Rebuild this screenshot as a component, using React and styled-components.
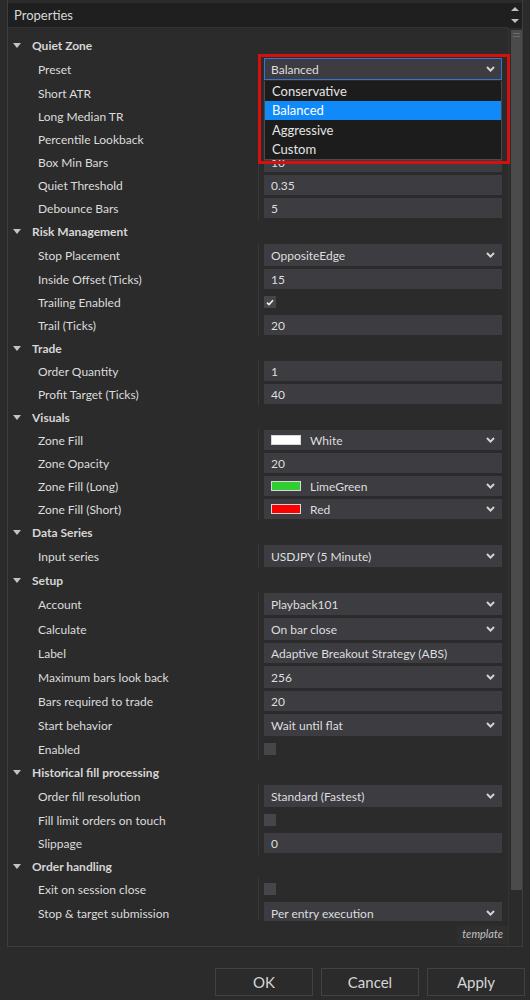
import React from "react";
import styled, { createGlobalStyle } from "styled-components";

const GlobalStyle = createGlobalStyle`
  html, body {
    margin: 0;
    padding: 0;
    background: #2b2b2b;
  }
  body {
    font-family: "Segoe UI", Lato, "Noto Sans", sans-serif;
    color: #dedede;
  }
`;

// values under the open Preset list are not visible, so they stay empty
const sections = [
  {
    title: "Quiet Zone",
    rows: [
      { label: "Preset", type: "open", value: "Balanced" },
      { label: "Short ATR", type: "text", value: "" },
      { label: "Long Median TR", type: "text", value: "" },
      { label: "Percentile Lookback", type: "text", value: "" },
      { label: "Box Min Bars", type: "text", value: "10" },
      { label: "Quiet Threshold", type: "text", value: "0.35" },
      { label: "Debounce Bars", type: "text", value: "5" },
    ],
  },
  {
    title: "Risk Management",
    rows: [
      { label: "Stop Placement", type: "enum", value: "OppositeEdge" },
      { label: "Inside Offset (Ticks)", type: "text", value: "15" },
      { label: "Trailing Enabled", type: "check", checked: true },
      { label: "Trail (Ticks)", type: "text", value: "20" },
    ],
  },
  {
    title: "Trade",
    rows: [
      { label: "Order Quantity", type: "text", value: "1" },
      { label: "Profit Target (Ticks)", type: "text", value: "40" },
    ],
  },
  {
    title: "Visuals",
    rows: [
      { label: "Zone Fill", type: "color", value: "White", swatch: "#ffffff" },
      { label: "Zone Opacity", type: "text", value: "20" },
      { label: "Zone Fill (Long)", type: "color", value: "LimeGreen", swatch: "#32cd32" },
      { label: "Zone Fill (Short)", type: "color", value: "Red", swatch: "#ff0000" },
    ],
  },
  {
    title: "Data Series",
    rows: [{ label: "Input series", type: "enum", value: "USDJPY (5 Minute)" }],
  },
  {
    title: "Setup",
    rows: [
      { label: "Account", type: "enum", value: "Playback101" },
      { label: "Calculate", type: "enum", value: "On bar close" },
      { label: "Label", type: "text", value: "Adaptive Breakout Strategy (ABS)" },
      { label: "Maximum bars look back", type: "enum", value: "256" },
      { label: "Bars required to trade", type: "text", value: "20" },
      { label: "Start behavior", type: "enum", value: "Wait until flat" },
      { label: "Enabled", type: "check", checked: false },
    ],
  },
  {
    title: "Historical fill processing",
    rows: [
      { label: "Order fill resolution", type: "enum", value: "Standard (Fastest)" },
      { label: "Fill limit orders on touch", type: "check", checked: false },
      { label: "Slippage", type: "text", value: "0" },
    ],
  },
  {
    title: "Order handling",
    rows: [
      { label: "Exit on session close", type: "check", checked: false },
      { label: "Stop & target submission", type: "enum", value: "Per entry execution" },
    ],
  },
];

const presetOptions = ["Conservative", "Balanced", "Aggressive", "Custom"];

const Chevron = () => (
  <ChevronIcon width="9" height="6" viewBox="0 0 9 6">
    <polyline points="1,1 4.5,4.6 8,1" fill="none" stroke="#d4d4d4" strokeWidth="2" />
  </ChevronIcon>
);

const CheckMark = () => (
  <svg width="8" height="7" viewBox="0 0 8 7">
    <polyline points="1,3.6 3,5.5 7,1.2" fill="none" stroke="#f2f2f2" strokeWidth="1.6" />
  </svg>
);

const Value = ({ row }) => {
  if (row.type === "check") {
    return <CheckBox>{row.checked && <CheckMark />}</CheckBox>;
  }
  if (row.type === "enum" || row.type === "open") {
    return (
      <Box $open={row.type === "open"}>
        <BoxText>{row.value}</BoxText>
        <Chevron />
      </Box>
    );
  }
  if (row.type === "color") {
    return (
      <Box>
        <Swatch $color={row.swatch} />
        <BoxText>{row.value}</BoxText>
        <Chevron />
      </Box>
    );
  }
  return (
    <Box>
      <BoxText>{row.value}</BoxText>
    </Box>
  );
};

const App = () => {
  return (
    <Window>
      <GlobalStyle />
      <Panel>
        <Main>
          <TitleBar>Properties</TitleBar>
          <Grid>
            {sections.map((section) => (
              <React.Fragment key={section.title}>
                <CategoryRow>
                  <Triangle />
                  <CategoryTitle>{section.title}</CategoryTitle>
                </CategoryRow>
                {section.rows.map((row) => (
                  <Row key={row.label} $tall={row.type === "enum" || row.type === "open"}>
                    <LabelCell>{row.label}</LabelCell>
                    <ValueCell>
                      <Value row={row} />
                    </ValueCell>
                  </Row>
                ))}
              </React.Fragment>
            ))}
          </Grid>
          <Description>
            <DescriptionTag>template</DescriptionTag>
          </Description>
        </Main>
        <ScrollBar>
          <ScrollButtons>
            <ArrowUp />
            <ArrowDown />
          </ScrollButtons>
          <Track>
            <Thumb>
              <Grip />
              <Grip />
            </Thumb>
          </Track>
        </ScrollBar>
      </Panel>

      <Footer>
        <Button>OK</Button>
        <Button>Cancel</Button>
        <Button>Apply</Button>
      </Footer>

      <Highlight />
      <DropList>
        {presetOptions.map((opt) => (
          <DropItem key={opt} $selected={opt === "Balanced"}>
            {opt}
          </DropItem>
        ))}
      </DropList>
    </Window>
  );
};

export default App;

const Window = styled.div`
  position: relative;
  width: 530px;
  height: 1000px;
  overflow: hidden;
  background: #2b2b2b;
`;

const Panel = styled.div`
  display: flex;
  box-sizing: border-box;
  margin-left: 7px;
  width: 516px;
  height: 947px;
  border: 1px solid #3d3d3d;
  border-top: none;
`;

const Main = styled.div`
  display: flex;
  flex-direction: column;
  width: 500px;
`;

const TitleBar = styled.div`
  margin-top: 3px;
  height: 25px;
  display: flex;
  align-items: center;
  padding-left: 6px;
  background: #1f1f1f;
  border-bottom: 1px solid #333;
  box-sizing: border-box;
  font-size: 13px;
  color: #d8d8d8;
`;

const Grid = styled.div`
  height: 893px;
  padding-top: 6px;
  box-sizing: border-box;
  overflow: hidden;
`;

const CategoryRow = styled.div`
  height: 23px;
  display: flex;
  align-items: center;
  padding-left: 5px;
`;

const Triangle = styled.div`
  width: 0;
  height: 0;
  border-left: 4px solid transparent;
  border-right: 4px solid transparent;
  border-top: 5px solid #c4c4c4;
`;

const CategoryTitle = styled.span`
  margin-left: 11px;
  font-size: 12px;
  font-weight: 700;
  color: #d6d6d6;
`;

const Row = styled.div`
  display: grid;
  grid-template-columns: 251px 1fr;
  height: ${(p) => (p.$tall ? 25 : 23)}px;
`;

const LabelCell = styled.div`
  display: flex;
  align-items: center;
  padding-left: 30px;
  border-right: 1px solid #383838;
  font-size: 12px;
  color: #dcdcdc;
  white-space: nowrap;
`;

const ValueCell = styled.div`
  display: flex;
  align-items: center;
  padding: 1px 6px 2px 5px;
`;

const Box = styled.div`
  flex: 1;
  height: 100%;
  display: flex;
  align-items: center;
  box-sizing: border-box;
  padding: 0 6px 0 6px;
  background: #3c3c41;
  border: 1px solid ${(p) => (p.$open ? "#3674d2" : "#3c3c41")};
`;

const BoxText = styled.span`
  flex: 1;
  font-size: 12px;
  color: #dedede;
  white-space: nowrap;
`;

const ChevronIcon = styled.svg`
  flex-shrink: 0;
`;

const Swatch = styled.span`
  width: 28px;
  height: 8px;
  margin-right: 9px;
  background: ${(p) => p.$color};
  border: 1px solid #d8d8d8;
`;

const CheckBox = styled.div`
  width: 12px;
  height: 12px;
  display: flex;
  align-items: center;
  justify-content: center;
  background: #45454a;
`;

const Description = styled.div`
  height: 25px;
  display: flex;
  justify-content: flex-end;
  align-items: flex-start;
  padding-top: 5px;
  box-sizing: border-box;
`;

const DescriptionTag = styled.span`
  height: 18px;
  line-height: 16px;
  padding: 0 5px 0 5px;
  background: #2f2f2f;
  font-size: 11px;
  font-style: italic;
  color: #c2c2c2;
`;

const ScrollBar = styled.div`
  width: 14px;
  display: flex;
  flex-direction: column;
`;

const ScrollButtons = styled.div`
  margin-top: 3px;
  height: 25px;
  background: #1f1f1f;
  display: flex;
  flex-direction: column;
  align-items: center;
  justify-content: space-between;
  padding: 4px 0 5px 0;
  box-sizing: border-box;
`;

const ArrowUp = styled.div`
  width: 0;
  height: 0;
  border-left: 4px solid transparent;
  border-right: 4px solid transparent;
  border-bottom: 4px solid #c0c0c0;
`;

const ArrowDown = styled.div`
  width: 0;
  height: 0;
  border-left: 4px solid transparent;
  border-right: 4px solid transparent;
  border-top: 4px solid #c0c0c0;
`;

const Track = styled.div`
  flex: 1;
  padding: 2px 0 0 2px;
  border-left: 1px solid #333;
`;

const Thumb = styled.div`
  width: 11px;
  height: 860px;
  background: #4b4b4b;
  display: flex;
  flex-direction: column;
  align-items: center;
  gap: 2px;
  padding-top: 3px;
  box-sizing: border-box;
`;

const Grip = styled.div`
  width: 7px;
  height: 1px;
  background: #6a6a6a;
`;

const Footer = styled.div`
  display: flex;
  justify-content: flex-end;
  gap: 8px;
  margin-top: 21px;
  padding-right: 5px;
`;

const Button = styled.button`
  width: 98px;
  height: 28px;
  background: #2b2b2b;
  border: 1px solid #424242;
  color: #d6d6d6;
  font-family: "Segoe UI", Lato, "Noto Sans", sans-serif;
  font-size: 15px;
  padding: 0;
`;

const Highlight = styled.div`
  position: absolute;
  left: 258px;
  top: 54px;
  width: 252px;
  height: 110px;
  box-sizing: border-box;
  border: 3px solid #d60f0f;
  pointer-events: none;
`;

const DropList = styled.div`
  position: absolute;
  left: 264px;
  top: 81px;
  width: 238px;
  box-sizing: border-box;
  background: #1c1c1c;
  border: 1px solid #4a4a4a;
  border-top: none;
`;

const DropItem = styled.div`
  height: 19.5px;
  display: flex;
  align-items: center;
  padding-left: 7px;
  font-size: 13px;
  color: ${(p) => (p.$selected ? "#ffffff" : "#e4e4e4")};
  background: ${(p) => (p.$selected ? "#0f8af8" : "transparent")};
`;
